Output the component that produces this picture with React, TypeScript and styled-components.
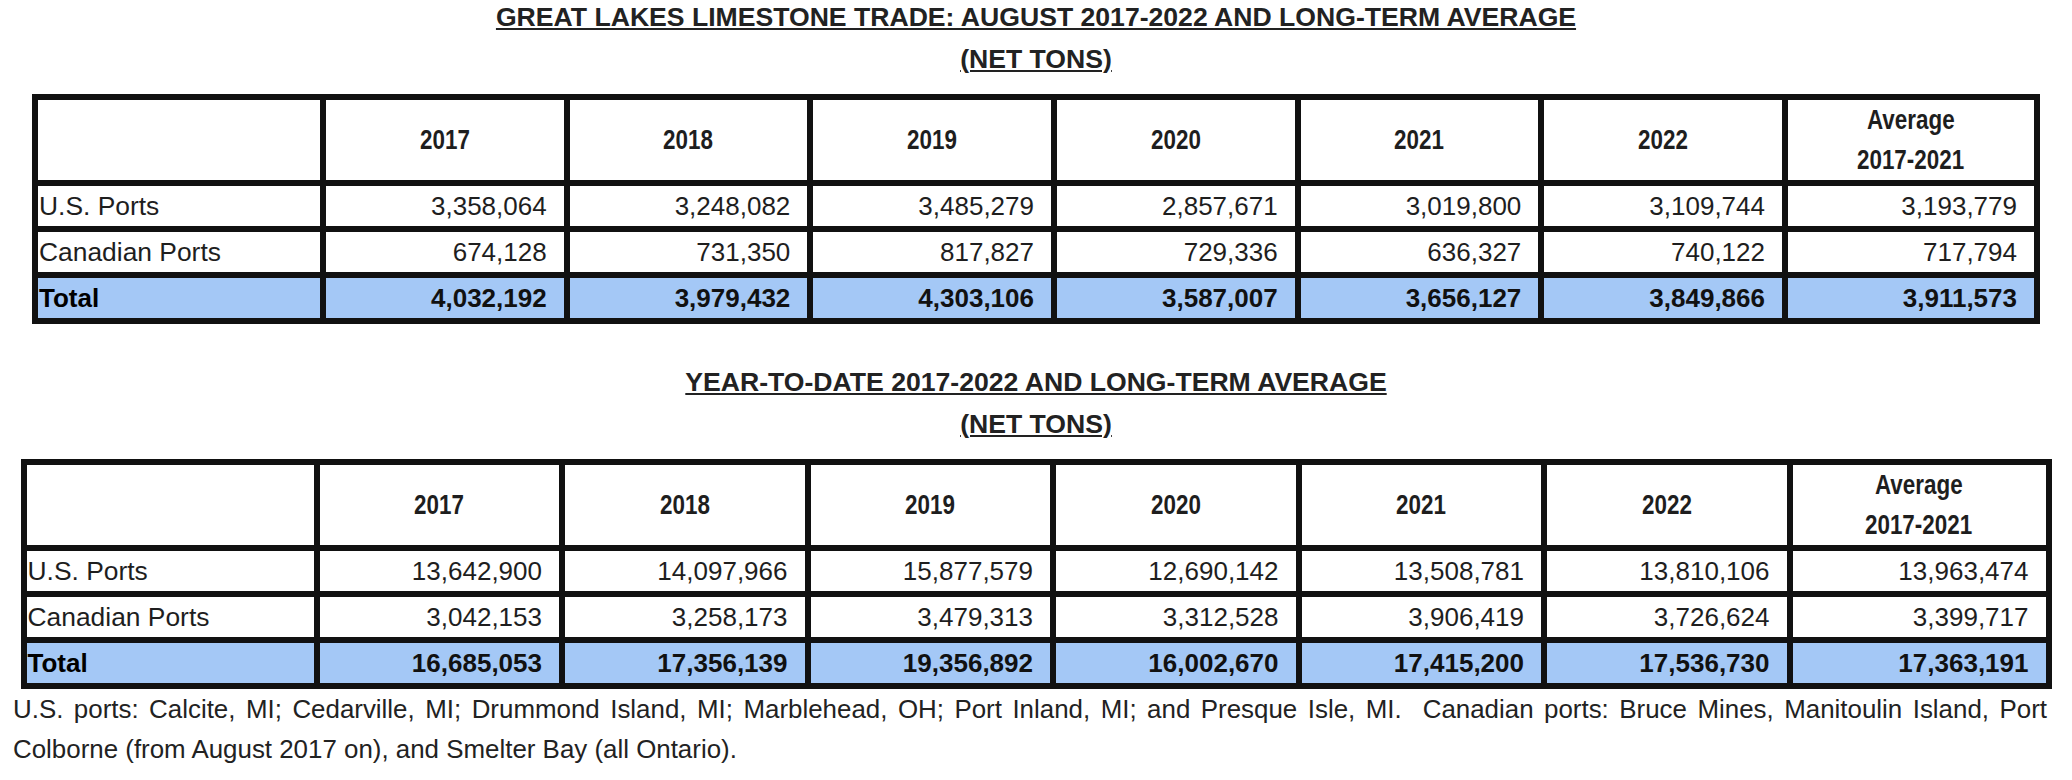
import React from 'react';
import styled, { createGlobalStyle, css } from 'styled-components';

const GlobalStyle = createGlobalStyle`
    html, body {
        margin: 0;
        padding: 0;
        background: #ffffff;
    }
    body {
        font-family: 'Liberation Sans', Arial, sans-serif;
        color: #222222;
    }
`;

type Row = { label: string; values: string[] };

const years = ['2017', '2018', '2019', '2020', '2021', '2022'];

const august: Row[] = [
    {
        label: 'U.S. Ports',
        values: ['3,358,064', '3,248,082', '3,485,279', '2,857,671', '3,019,800', '3,109,744', '3,193,779'],
    },
    {
        label: 'Canadian Ports',
        values: ['674,128', '731,350', '817,827', '729,336', '636,327', '740,122', '717,794'],
    },
];
const augustTotal = ['4,032,192', '3,979,432', '4,303,106', '3,587,007', '3,656,127', '3,849,866', '3,911,573'];

const ytd: Row[] = [
    {
        label: 'U.S. Ports',
        values: ['13,642,900', '14,097,966', '15,877,579', '12,690,142', '13,508,781', '13,810,106', '13,963,474'],
    },
    {
        label: 'Canadian Ports',
        values: ['3,042,153', '3,258,173', '3,479,313', '3,312,528', '3,906,419', '3,726,624', '3,399,717'],
    },
];
const ytdTotal = ['16,685,053', '17,356,139', '19,356,892', '16,002,670', '17,415,200', '17,536,730', '17,363,191'];

const Page = styled.main`
    display: flex;
    flex-direction: column;
    align-items: center;
    width: 2072px;
`;

const Caption = styled.h2<{ $first?: boolean }>`
    margin: ${({ $first }) => ($first ? '-4px 0 0' : '37px 0 0')};
    font-size: 26.6px;
    font-weight: 700;
    line-height: 42px;
    text-align: center;
    color: #222222;
    span {
        display: block;
        text-decoration: underline;
        text-decoration-thickness: 2px;
        text-underline-offset: 2px;
    }
`;

const Sheet = styled.div<{ $width: number; $first: number; $last: number }>`
    display: grid;
    width: ${({ $width }) => $width}px;
    box-sizing: border-box;
    margin-top: 14px;
    padding: 6px;
    gap: 6px;
    background: #111111;
    grid-template-columns: ${({ $first, $last }) => `${$first}px repeat(6, 1fr) ${$last}px`};
    grid-template-rows: 80px 40px 40px 40px;
`;

type Kind = 'corner' | 'head' | 'label' | 'num' | 'totalLabel' | 'total';

const Cell = styled.div<{ $kind: Kind }>`
    display: flex;
    align-items: center;
    background: #ffffff;
    color: #1e1e1e;
    white-space: nowrap;
    overflow: hidden;
    ${({ $kind }) => {
        switch ($kind) {
            case 'head':
                return css`
                    flex-direction: column;
                    justify-content: center;
                    font-weight: 700;
                    font-size: 27px;
                    line-height: 40px;
                `;
            case 'label':
                return css`
                    padding-left: 1px;
                    font-size: 26.4px;
                `;
            case 'num':
                return css`
                    justify-content: flex-end;
                    padding-right: 17px;
                    font-size: 26px;
                `;
            case 'totalLabel':
                return css`
                    padding-left: 1px;
                    background: #a4c8f6;
                    color: #000000;
                    font-weight: 700;
                    font-size: 26px;
                `;
            case 'total':
                return css`
                    justify-content: flex-end;
                    padding-right: 17px;
                    background: #a4c8f6;
                    color: #111111;
                    font-weight: 700;
                    font-size: 26px;
                `;
            default:
                return '';
        }
    }}
`;

/* header cells in the sheet use a condensed bold face */
const Narrow = styled.span`
    display: block;
    transform: scaleX(0.83);
    transform-origin: center;
`;

const Note = styled.p`
    align-self: flex-start;
    width: 2034px;
    margin: 0 0 0 13px;
    font-size: 25.9px;
    line-height: 40px;
    text-align: justify;
    color: #222222;
`;

const TradeTable = ({
    rows,
    total,
    width,
    first,
    last,
}: {
    rows: Row[];
    total: string[];
    width: number;
    first: number;
    last: number;
}) => (
    <Sheet $width={width} $first={first} $last={last}>
        <Cell $kind="corner" />
        {years.map((y) => (
            <Cell key={y} $kind="head">
                <Narrow>{y}</Narrow>
            </Cell>
        ))}
        <Cell $kind="head">
            <Narrow>Average</Narrow>
            <Narrow>2017-2021</Narrow>
        </Cell>
        {rows.map((row) => (
            <React.Fragment key={row.label}>
                <Cell $kind="label">{row.label}</Cell>
                {row.values.map((v, i) => (
                    <Cell key={i} $kind="num">
                        {v}
                    </Cell>
                ))}
            </React.Fragment>
        ))}
        <Cell $kind="totalLabel">Total</Cell>
        {total.map((v, i) => (
            <Cell key={i} $kind="total">
                {v}
            </Cell>
        ))}
    </Sheet>
);

export default function App() {
    return (
        <>
            <GlobalStyle />
            <Page>
                <Caption $first>
                    <span>GREAT LAKES LIMESTONE TRADE: AUGUST 2017-2022 AND LONG-TERM AVERAGE</span>
                    <span>(NET TONS)</span>
                </Caption>
                <TradeTable rows={august} total={augustTotal} width={2008} first={282} last={246} />
                <Caption>
                    <span>YEAR-TO-DATE 2017-2022 AND LONG-TERM AVERAGE</span>
                    <span>(NET TONS)</span>
                </Caption>
                <TradeTable rows={ytd} total={ytdTotal} width={2031} first={287} last={253} />
                <Note>
                    U.S. ports: Calcite, MI; Cedarville, MI; Drummond Island, MI; Marblehead, OH; Port
                    Inland, MI; and Presque Isle, MI.{'\u00a0 '}Canadian ports: Bruce Mines, Manitoulin
                    Island, Port Colborne (from August 2017 on), and Smelter Bay (all Ontario).
                </Note>
            </Page>
        </>
    );
}
